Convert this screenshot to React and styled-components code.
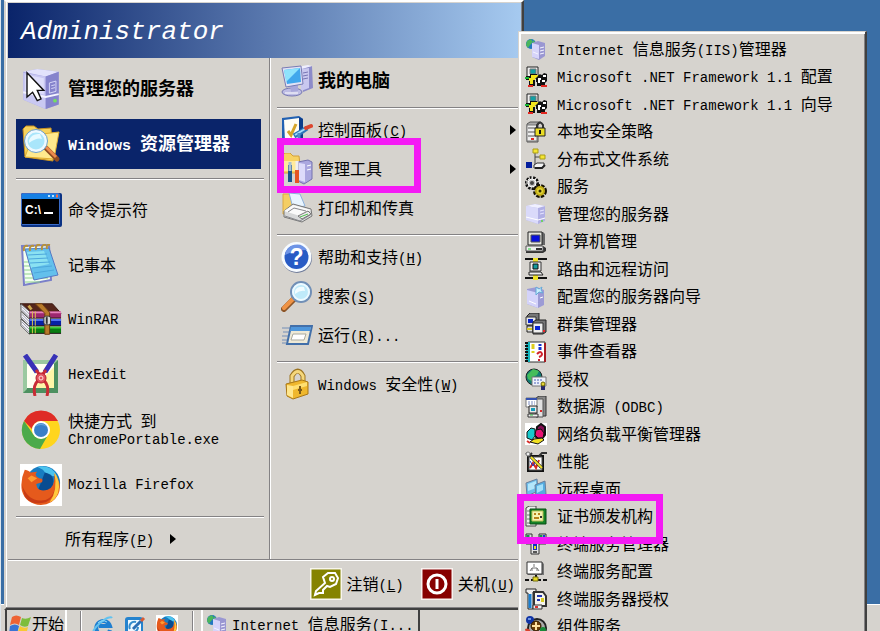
import styled, { createGlobalStyle, css } from "styled-components";

const GlobalStyle = createGlobalStyle`
  * {
    box-sizing: border-box;
  }

  body {
    margin: 0;
    background: #3a6ea5;
    color: #000;
    font-family: "Liberation Mono", "Noto Sans CJK SC", monospace;
    font-size: 16px;
    line-height: 18px;
  }

  button {
    margin: 0;
    border: none;
    background: none;
    color: inherit;
    font: inherit;
    text-align: left;
    cursor: default;
  }

  ul {
    margin: 0;
    padding: 0;
    list-style: none;
  }
`;

const face = "#d6d3ce";

const Desktop = styled.main`
  position: relative;
  display: flex;
  flex-direction: column;
  height: 100vh;
  overflow: hidden;
  border-left: 1px solid #dde5ec;
`;

const Wallpaper = styled.div`
  flex: 1;
  background: #3a6ea5;
`;

const Svg = styled.svg`
  display: block;
  flex: none;
  width: ${(props) => props.$size}px;
  height: ${(props) => props.$size}px;
`;

const Latin = styled.span`
  font-size: ${(props) => (props.$bold ? 15 : 14)}px;
`;

const Cjk = styled.span`
  font-family: "Noto Sans CJK SC", sans-serif;
  font-size: ${(props) => (props.$bold ? 18 : 16)}px;
`;

const Words = styled.span`
  white-space: ${(props) => (props.$lines ? "pre-line" : "pre")};
  font-weight: ${(props) => (props.$bold ? 700 : 400)};
  ${(props) => props.$lines && "line-height: 17px;"}
`;

/* start menu */

const StartMenu = styled.nav`
  position: absolute;
  top: 0;
  left: 3px;
  z-index: 2;
  width: 520px;
  max-width: 100%;
  padding: 1px 1px 1px 2px;
  background: ${face};
  border: 2px solid;
  border-color: #fff #404040 #404040 ${face};
  box-shadow: inset -1px -1px #848284, inset 1px 0 #fff;
`;

const Banner = styled.header`
  display: flex;
  align-items: center;
  height: 55px;
  padding: 2px 13px 0;
  background: linear-gradient(90deg, #0a246a, #a6caf0);
`;

const UserName = styled.h1`
  margin: 0;
  color: #fff;
  font-size: 26px;
  font-style: italic;
  font-weight: 400;
  line-height: 30px;
`;

const Columns = styled.div`
  display: grid;
  grid-template-columns: 262px 1fr;
  height: 502px;
  border-bottom: 1px solid #848284;
`;

const Pinned = styled.div`
  padding: 6px 5px 0 8px;
  border-right: 1px solid #848284;
`;

const Places = styled.div`
  padding: 4px 0 0 6px;
  border-left: 1px solid #fff;
`;

const Stack = styled.ul`
  display: grid;
  gap: ${(props) => props.$gap}px;
`;

const Item = styled.li`
  position: relative;
`;

const Divider = styled.hr`
  height: 2px;
  margin: ${(props) => props.$margin};
  border: solid;
  border-width: 1px 0;
  border-color: #848284 transparent #fff;
`;

const PinnedButton = styled.button`
  display: flex;
  align-items: center;
  gap: 6px;
  width: 245px;
  height: 50px;
  padding: 0 4px;
  ${(props) =>
    props.$active &&
    css`
      background: #0a246a;
      color: #fff;
    `}
`;

const AllPrograms = styled.button`
  display: flex;
  align-items: center;
  gap: 16px;
  height: 38px;
  padding: 0 0 0 49px;
`;

const PlaceButton = styled.button`
  display: flex;
  align-items: center;
  gap: 5px;
  width: 100%;
  height: 38px;
  padding: 0 0 0 4px;
`;

const Arrow = styled.span`
  width: 0;
  height: 0;
  margin-left: ${(props) => (props.$end ? "auto" : "0")};
  margin-right: ${(props) => (props.$end ? "5px" : "0")};
  border: solid transparent;
  border-width: 5px 0 5px 6px;
  border-left-color: #000;
`;

const Footer = styled.footer`
  display: flex;
  align-items: center;
  justify-content: flex-end;
  gap: 17px;
  height: 47px;
  padding-right: 6px;
  border-top: 1px solid #fff;
`;

const FooterButton = styled.button`
  display: flex;
  align-items: center;
  gap: 5px;
  padding: 0;
`;

/* admin tools */

const Submenu = styled.ul`
  position: absolute;
  top: 31px;
  left: 517px;
  z-index: 3;
  width: max-content;
  background: ${face};
  border: 1px solid ${face};
  border-right: 2px solid #404040;
  box-shadow: inset 1px 1px #fff, inset 2px 2px #fff, inset -1px 0 #848284;
  && {
    padding: 3px 2px 2px;
  }
`;

const ToolItem = styled.li`
  position: relative;
  height: 28px;

  &:nth-child(even) {
    height: 27px;
  }
`;

const ToolButton = styled.button`
  display: flex;
  align-items: center;
  gap: 10px;
  width: 100%;
  height: 100%;
  padding: 0 30px 0 4px;
`;

const Marker = styled.span`
  position: absolute;
  z-index: 4;
  top: ${(props) => props.$top}px;
  left: ${(props) => props.$left}px;
  width: ${(props) => props.$width}px;
  height: ${(props) => props.$height}px;
  border: 7px solid #f41af4;
  pointer-events: none;
`;

/* taskbar */

const Taskbar = styled.footer`
  display: flex;
  align-items: flex-start;
  height: 27px;
  padding: 4px 0 0 4px;
  background: ${face};
  box-shadow: inset 0 1px #fff;
`;

const StartButton = styled.button`
  display: flex;
  align-items: center;
  gap: 1px;
  height: 31px;
  width: 62px;
  padding: 2px 2px 0;
  border: 2px solid;
  border-color: #404040 #fff #fff #404040;
  white-space: nowrap;
`;

const Grip = styled.span`
  width: 2px;
  height: 30px;
  margin: 3px ${(props) => props.$after}px 0 ${(props) => props.$before}px;
  background: #848284;
  border-right: 1px solid #fff;
`;

const QuickLaunch = styled.div`
  display: flex;
  gap: 10px;
  padding-top: 7px;
`;

const QuickButton = styled.button`
  padding: 0;
`;

const TaskButton = styled.button`
  display: flex;
  align-items: center;
  gap: 4px;
  width: 219px;
  height: 31px;
  padding: 2px 3px 0;
  border: 2px solid;
  border-color: #fff #404040 #404040 #fff;
`;

/* large drawings */

const ServerShape = () => (
  <>
    <path d="M3 4 18 1 41 4 41 39 27 44 3 34Z" fill="#aaa8e2" />
    <path d="M3 4 18 1 41 4 27 9Z" fill="#e2e2fb" />
    <path d="M3 5 27 9V44L3 34Z" fill="#c9c8f2" />
    <path d="M27 9 41 4V39L27 44Z" fill="#8583cc" />
    <path d="M5 7 25 11V28L5 24Z" fill="#dedefa" />
    <path d="M3 26 27 31 41 28" fill="none" stroke="#f4f4ff" strokeWidth="2" />
    <path d="M31 16 38 14V25L31 27ZM33 19 37 18M33 22 37 21" fill="none" stroke="#dcdcfa" />
    <circle cx="37" cy="35" r="2" fill="#73e05f" />
  </>
);

const ServerCursor = () => (
  <Svg $size={42} viewBox="2 0 40 45">
    <ServerShape />
    <path d="M7 5V31L13 26 18 35 22 33 18 24H25Z" fill="#fff" stroke="#111" strokeWidth="1.5" />
  </Svg>
);

const ExplorerIcon = () => (
  <Svg $size={42} viewBox="0 0 42 42">
    <path d="M3 6 6 3H14L18 6 31 5 33 38 5 34Z" fill="#f7d35d" stroke="#c89120" />
    <path d="M5 34 13 12 39 9 34 36Z" fill="#ffe98d" stroke="#e0ae32" />
    <path d="M26 25 37 36" stroke="#8d4b21" strokeWidth="5" strokeLinecap="round" />
    <path d="M26 24 36 34" stroke="#ed8a4b" strokeWidth="3" />
    <circle cx="16" cy="18" r="10" fill="#a9e6fb" stroke="#eef9ff" strokeWidth="3" />
    <circle cx="16" cy="18" r="11.5" fill="none" stroke="#6e9fc4" />
    <path d="M9 17Q12 10 20 11L22 16Q17 14 9 20Z" fill="#e7faff" />
  </Svg>
);

const PromptIcon = () => (
  <Svg $size={42} viewBox="0 0 42 42">
    <rect x="1" y="4" width="41" height="34" rx="2" fill="#0b3284" />
    <rect x="1" y="4" width="39" height="32" rx="2" fill="#3a6cc8" />
    <rect x="2" y="5" width="37" height="5" fill="#1680e4" />
    <path d="M28 7H30M32 7H34" stroke="#bce2ff" strokeWidth="2" />
    <path d="M36 7H38" stroke="#ff6b3d" strokeWidth="3" />
    <rect x="2" y="10" width="37" height="25" fill="#000" />
    <text x="5" y="25" fill="#fff" fontFamily="Liberation Sans" fontWeight="700" fontSize="12">
      C:\
    </text>
    <path d="M24 24H33" stroke="#fff" strokeWidth="2" />
  </Svg>
);

const NotepadIcon = () => (
  <Svg $size={42} viewBox="0 0 42 42">
    <path d="M2 2 29 1 31 36 4 41Z" fill="#f3fff0" stroke="#7a7fc9" strokeWidth="2" />
    <path d="M4 18H26M4 22H26M4 26H26M4 30H27M5 34H28M5 38H20" stroke="#8fd08c" />
    <path d="M5 5 29 4 38 31 14 36Z" fill="#63c0ec" stroke="#5578c4" />
    <path d="M7 8 24 7 29 20 11 24Z" fill="#8ae1f2" />
    <path d="M8 11 27 10M9 15 28 14M10 19 30 18M12 24 32 22M14 29 34 26" stroke="#4ca8dc" />
    <path d="M4 7Q3 1 8 2M10 7Q9 1 14 2M16 6Q15 0 20 1M22 6Q21 0 26 1M27 5Q26 0 30 1" fill="none" stroke="#b8923a" strokeWidth="2" />
  </Svg>
);

const Book = ({ y, top, side }) => (
  <g transform={`translate(0 ${y})`}>
    <path d="M1 0 10 8V16L1 7Z" fill="#f3f3f7" stroke="#555" />
    <path d="M2 3 10 11M2 6 10 14" stroke="#99a" />
    <path d="M10 8H43V15H10Z" fill={side} />
    <path d="M10 9H43" stroke={top} strokeWidth="2" />
    <path d="M10 15H43" stroke="#1d1014" />
    <path d="M13 8V15M16 8V15" stroke="#e0ca4e" />
  </g>
);

const WinRarIcon = () => (
  <Svg $size={42} viewBox="0 0 44 42">
    <path d="M0 4 34 4 43 14H10Z" fill="#55261b" stroke="#39160f" />
    <Book y={20} top="#41d038" side="#087c12" />
    <Book y={12} top="#4f72f4" side="#0721a5" />
    <Book y={4} top="#e781bd" side="#9d286e" />
    <path d="M16 4H23L31 13V36H26V14Z" fill="#b87a2a" stroke="#6c3d12" />
    <rect x="25" y="17" width="7" height="9" rx="2" fill="#d7d9da" stroke="#333" />
    <path d="M28 18V25" stroke="#333" strokeWidth="2" />
    <path d="M9 6 12 10" stroke="#cda74b" strokeWidth="3" />
  </Svg>
);

const HexEditIcon = () => (
  <Svg $size={42} viewBox="0 0 42 42">
    <rect x="3" y="6" width="35" height="33" fill="#4d9060" />
    <path d="M3 6H38L34 10H7V35L3 39Z" fill="#9bc9a0" />
    <rect x="7" y="10" width="27" height="24" fill="#fffff0" />
    <path d="M13 34 34 13V34Z" fill="#fff6a8" />
    <path d="M5 1 17 18M36 1 25 18" stroke="#3832b7" strokeWidth="5" />
    <path d="M16 16 26 29Q29 34 27 42M26 16 16 29Q13 34 15 42" fill="none" stroke="#c92c35" strokeWidth="3" />
    <circle cx="21" cy="24" r="5" fill="#e1535c" stroke="#b41d2b" />
    <circle cx="21" cy="24" r="2" fill="none" stroke="#ffe0df" />
  </Svg>
);

const ChromeIcon = () => (
  <Svg $size={42} viewBox="0 0 42 42">
    <circle cx="21" cy="21" r="19" fill="#ffd51d" />
    <path d="M4 12A19 19 0 0 1 38 12H21A9 9 0 0 0 12 20Z" fill="#df2c27" />
    <path d="M4 12A19 19 0 0 0 20 40L28 26A9 9 0 0 1 13 25Z" fill="#4baa4b" />
    <circle cx="21" cy="21" r="9" fill="#fff" />
    <circle cx="21" cy="21" r="7" fill="#397fc7" />
    <path d="M15 18A7 7 0 0 1 27 18Q21 14 15 18Z" fill="#67a4dc" />
  </Svg>
);

const FirefoxIcon = ({ size }) => (
  <Svg $size={size} viewBox="0 0 44 44">
    <rect width="44" height="44" fill="#fff" />
    <circle cx="24" cy="20" r="18" fill="#187cc1" />
    <path d="M18 3Q33 0 39 13 28 13 24 6Z" fill="#4cc3ee" />
    <path d="M26 9Q38 11 34 25 29 32 19 27Z" fill="#084c91" />
    <path d="M5 6Q10 7 11 9L18 8Q14 12 20 15 25 15 23 19L17 21Q18 30 29 27 37 24 36 10 45 21 40 32 34 43 22 43 6 42 2 28 0 17 5 6Z" fill="#e55a1c" />
    <path d="M2 22Q9 40 24 38 35 37 37 23 36 36 27 40 12 44 5 34Z" fill="#c83b15" />
    <path d="M36 9Q43 18 40 30 37 38 31 40 40 28 36 9Z" fill="#ffc83d" />
    <path d="M8 15 12 12 18 15 12 19Z" fill="#ff9b31" />
  </Svg>
);

const ComputerIcon = () => (
  <Svg $size={32} viewBox="0 0 32 32">
    <path d="M20 3 31 1 32 23 22 27Z" fill="#8c8bc9" />
    <path d="M16 2 27 0 31 1 21 4Z" fill="#eeeefe" />
    <path d="M20 4 28 3V23L20 26Z" fill="#c9c8ef" />
    <path d="M22 8 27 7M22 11 27 10M22 14 27 13" stroke="#7776b5" />
    <ellipse cx="11" cy="27" rx="10" ry="4" fill="#bdbce4" stroke="#7778b3" />
    <path d="M9 20 17 20 17 26 10 27Z" fill="#a8a7da" />
    <path d="M1 3 20 1 22 19 5 22Z" fill="#e1e2f5" stroke="#797bb4" />
    <path d="M3 5 19 3 20 17 6 19Z" fill="#41a7ec" />
    <path d="M3 5 19 3 5 17Z" fill="#8fe3fc" />
    <path d="M4 28H17" stroke="#fff" />
  </Svg>
);

const ControlIcon = () => (
  <Svg $size={32} viewBox="0 0 32 32">
    <path d="M1 4 18 2 22 5V27L5 30 1 27Z" fill="#2261b2" />
    <path d="M3 6 18 4V24L4 27Z" fill="#fffdf5" />
    <path d="M18 3 22 5V27L18 24Z" fill="#0c3d8b" />
    <path d="M7 17 10 21 15 10" fill="none" stroke="#d6a529" strokeWidth="3" />
    <path d="M13 22 20 18 26 14" stroke="#2b75b7" strokeWidth="5" />
    <path d="M14 21 24 15" stroke="#a4dcfa" strokeWidth="2" />
    <path d="M25 14 30 12" stroke="#dd462f" strokeWidth="4" strokeLinecap="round" />
    <path d="M18 19V29" stroke="#4e8dca" strokeWidth="3" />
  </Svg>
);

const AdminIcon = () => (
  <Svg $size={32} viewBox="0 0 32 32">
    <path d="M1 2 4 0H9L12 3H18L20 20H2Z" fill="#f7d262" stroke="#d3a038" />
    <path d="M2 8H18V18H3Z" fill="#ffeb9c" />
    <path d="M17 9 27 7 31 9V26L23 31 17 28Z" fill="#aaa7df" stroke="#7472ae" />
    <path d="M18 10 24 11V29L18 27Z" fill="#dddbfa" />
    <path d="M26 13 30 12M26 17 30 16" stroke="#fff" />
    <path d="M9 12V29" stroke="#18548c" strokeWidth="4" />
    <path d="M9 9V18" stroke="#a9bed0" strokeWidth="3" />
    <path d="M16 8V20" stroke="#eee" strokeWidth="3" />
    <path d="M16 17V30" stroke="#e55523" strokeWidth="4" />
  </Svg>
);

const PrinterIcon = () => (
  <Svg $size={32} viewBox="0 0 32 32">
    <path d="M2 2H11L15 8V22H2Z" fill="#f4ce64" stroke="#dba840" />
    <path d="M8 1 19 2 24 14 12 16Z" fill="#e9f5ff" stroke="#8cb2dc" />
    <path d="M3 19 12 12 30 17 31 24 21 30 3 25Z" fill="#d7d8d9" stroke="#777" />
    <path d="M3 19 12 13 30 18 19 24Z" fill="#fafafa" />
    <path d="M4 24 19 29 29 23M7 20 13 16 25 19" fill="none" stroke="#88898d" />
    <path d="M17 24 27 19 30 22 21 27Z" fill="#ececec" stroke="#777" />
    <path d="M19 25 27 22" stroke="#4dbd4c" />
  </Svg>
);

const HelpIcon = () => (
  <Svg $size={32} viewBox="0 0 32 32">
    <circle cx="16" cy="17" r="15" fill="#707c9a" />
    <circle cx="15.5" cy="16" r="15" fill="#f7fbff" />
    <circle cx="15.5" cy="16" r="12" fill="#285bc5" />
    <path d="M4 14A12 12 0 0 1 26 9Q14 9 4 14Z" fill="#6e94e6" />
    <text x="15.5" y="24" textAnchor="middle" fill="#fff" fontFamily="Liberation Sans" fontSize="23" fontWeight="700">
      ?
    </text>
  </Svg>
);

const SearchIcon = () => (
  <Svg $size={32} viewBox="0 0 32 32">
    <path d="M3 29 14 18" stroke="#8e5628" strokeWidth="6" strokeLinecap="round" />
    <path d="M3 28 13 18" stroke="#ef9345" strokeWidth="4" strokeLinecap="round" />
    <circle cx="20" cy="12" r="10" fill="#a9ddf5" stroke="#718fb6" strokeWidth="2" />
    <circle cx="20" cy="12" r="8" fill="#bfeafa" stroke="#edf9ff" strokeWidth="2" />
    <path d="M14 11Q16 6 23 7L24 11Q19 10 14 14Z" fill="#f2fcff" />
  </Svg>
);

const RunIcon = () => (
  <Svg $size={32} viewBox="0 0 32 32">
    <path d="M1 9H9M2 13H8M1 17H8M1 21H6M1 24H5" stroke="#738eb7" />
    <path d="M10 7H31L27 25H6Z" fill="#eee9d6" stroke="#426fa9" strokeWidth="2" />
    <path d="M10 8H30L29 12H9Z" fill="#4e96dc" />
    <path d="M12 15H25L23 21H10Z" fill="#fff" stroke="#a9a99f" />
  </Svg>
);

const LockIcon = () => (
  <Svg $size={32} viewBox="0 0 32 32">
    <path d="M11 15V8Q17-2 22 8V15" fill="none" stroke="#9c7421" strokeWidth="5" />
    <path d="M11 15V8Q17-1 22 8V15" fill="none" stroke="#f5d77b" strokeWidth="3" />
    <path d="M5 16 21 12 27 14V26L12 31 6 28Z" fill="#efb72d" stroke="#a97716" />
    <path d="M6 17 12 18V30L6 27Z" fill="#ffe68d" />
    <path d="M12 18 26 14V18L12 22Z" fill="#ffdf71" />
    <path d="M19 18V26M17 22H21" stroke="#7b5a19" strokeWidth="2" />
  </Svg>
);

const KeyIcon = () => (
  <Svg $size={32} viewBox="0 0 32 32">
    <rect width="32" height="32" fill="#f7f5ed" />
    <rect x="1.5" y="1.5" width="29" height="29" fill="#858300" />
    <path d="M15 15 13 9 18 5 25 5 28 10 26 16 20 19 17 18 13 22 13 25 9 25 5 27 6 23Z" fill="none" stroke="#fff" strokeWidth="2" />
    <circle cx="22" cy="11" r="2" fill="none" stroke="#fff" strokeWidth="2" />
  </Svg>
);

const PowerIcon = () => (
  <Svg $size={32} viewBox="0 0 32 32">
    <rect width="32" height="32" fill="#f7f1ee" />
    <rect x="1.5" y="1.5" width="29" height="29" fill="#870000" />
    <circle cx="16" cy="16" r="9" fill="none" stroke="#fff" strokeWidth="3" />
    <path d="M16 11V21" stroke="#fff" strokeWidth="3" />
  </Svg>
);

/* small drawings, 22 units square */

const Small = ({ children }) => (
  <Svg $size={22} viewBox="0 0 22 22">
    {children}
  </Svg>
);

const MiniServer = () => (
  <>
    <path d="M1 3 10 1 20 3V18L13 21 1 17Z" fill="#b1b0e5" />
    <path d="M1 3 13 5V21L1 17Z" fill="#dadafa" />
    <path d="M1 3 10 1 20 3 13 5Z" fill="#f0f0ff" />
    <path d="M1 14 13 17 20 15" fill="none" stroke="#fff" />
    <path d="M15 8 19 7M15 11 19 10" stroke="#e6e5ff" />
    <path d="M16 18H18" stroke="#70d064" strokeWidth="2" />
  </>
);

const IisIcon = () => (
  <Small>
    <circle cx="6" cy="6" r="5" fill="#2478bf" />
    <path d="M2 3 6 1 8 4 5 7 3 10 1 7ZM8 2 11 5 8 7Z" fill="#4bb65c" />
    <path d="M7 5 13 3 20 5V18L14 22 7 19Z" fill="#9a97d2" />
    <path d="M7 5 14 7V21L7 19Z" fill="#d6d4fa" />
    <path d="M15 10 19 9M15 13 19 12M15 16 19 15M8 14 13 16" stroke="#f5f4ff" />
  </Small>
);

const NetIcon = () => (
  <Small>
    <path d="M2 1H13V12H2Z" fill="#eee" stroke="#222" />
    <path d="M5 3H11V8H5Z" fill="#139fa4" stroke="#777" />
    <path d="M1 10H5V8H12V12H10V20H4V14H1Z" fill="#111" />
    <path d="M4 12H6V9H13V12H10V14H8V18H5V15H4Z" fill="#f3e51c" />
    <path d="M0 12H4" stroke="#19b437" strokeWidth="2" />
    <path d="M13 10Q14 7 17 9L19 7 22 8V15L20 17V20H12V16H11V12Z" fill="#111" />
    <path d="M13 12H16V14H15V17H13ZM18 9H21V11H18ZM17 14H20V16H17Z" fill="#fff" />
    <path d="M3 20H8M16 20H22" stroke="#e22720" strokeWidth="2" />
  </Small>
);

const PolicyIcon = () => (
  <Small>
    <path d="M2 3 5 1H16L13 4V21H2Z" fill="#aaa" stroke="#555" />
    <path d="M2 4H12V20H2Z" fill="#eee" stroke="#777" />
    <path d="M3 7H11M3 11H11M3 15H11" stroke="#555" />
    <path d="M6 18H9" stroke="#e02a22" strokeWidth="2" />
    <path d="M12 8V4Q15-1 18 4V8" fill="none" stroke="#333" strokeWidth="2" />
    <path d="M10 7H20V15H10Z" fill="#e9dc24" stroke="#222" />
    <path d="M15 9V13" stroke="#111" strokeWidth="2" />
  </Small>
);

const DfsIcon = () => (
  <Small>
    <path d="M10 4V17M10 9H15M10 17H15" fill="none" stroke="#444" />
    <path d="M8 1H13V5H8ZM15 7H20V11H15Z" fill="#f4e532" stroke="#a99c18" />
    <rect x="1" y="14" width="6" height="6" fill="#051f9d" />
    <path d="M9 17 12 15H19V18L17 20H9Z" fill="#f4f4f4" stroke="#333" />
    <path d="M10 20H17L20 17" fill="none" stroke="#222" strokeWidth="2" />
  </Small>
);

const GearIcon = () => (
  <Small>
    <circle cx="7" cy="7" r="5" fill="none" stroke="#111" strokeWidth="4" strokeDasharray="2 1" />
    <circle cx="7" cy="7" r="4" fill="#c5c5c5" stroke="#fff" />
    <circle cx="7" cy="7" r="2" fill="#444" />
    <circle cx="15" cy="15" r="5" fill="none" stroke="#151000" strokeWidth="4" strokeDasharray="3 1" />
    <circle cx="15" cy="15" r="4" fill="#e4d737" stroke="#c2ad17" strokeWidth="2" />
    <circle cx="15" cy="15" r="1.5" fill="#332c00" />
    <path d="M1 6H3M3 3 5 5M7 0V3M11 3 9 5" stroke="#eee" />
  </Small>
);

const ServerIcon = () => (
  <Small>
    <MiniServer />
  </Small>
);

const ManageIcon = () => (
  <Small>
    <path d="M4 1H18L20 3V14H4Z" fill="#666" />
    <path d="M3 1H17V14H3Z" fill="#e5e5df" stroke="#222" />
    <path d="M6 4H15V11H6Z" fill="#0910db" stroke="#555" />
    <path d="M1 15H18L21 17V20L18 22H1Z" fill="#333" />
    <path d="M1 15H18V20H1Z" fill="#eee" stroke="#555" />
    <path d="M3 18H6" stroke="#21cf32" />
    <path d="M11 18H17" stroke="#333" strokeWidth="2" />
  </Small>
);

const RoutingIcon = () => (
  <Small>
    <path d="M0 1H22M0 20H22" stroke="#111" strokeWidth="2" />
    <path d="M8 0H13V4H8ZM8 17H13V22H8Z" fill="#eee229" />
    <path d="M5 4H16V13H5Z" fill="#eee" stroke="#333" />
    <path d="M8 6H13V11H8Z" fill="#139a9b" stroke="#111" />
    <path d="M4 14H16L18 17H4Z" fill="#eee" stroke="#222" />
  </Small>
);

const WizardIcon = () => (
  <Small>
    <path d="M2 3 12 1 19 4V19L13 22 2 18Z" fill="#9c9bd5" />
    <path d="M2 4 13 7V22L2 18Z" fill="#d4d3fa" />
    <path d="M11 1 14 3 17 1 16 4 18 7 14 6 11 9 11 5Z" fill="#c7effc" stroke="#66a9d8" />
    <path d="M4 15 11 18M15 12 18 11" stroke="#fff" />
  </Small>
);

const ClusterIcon = () => (
  <Small>
    <path d="M2 3 5 0H14V12H2Z" fill="#777" stroke="#222" />
    <path d="M1 4H11V12H1Z" fill="#e5e5e5" stroke="#333" />
    <path d="M3 6H8V10H3Z" fill="#0822ca" />
    <path d="M2 13H8V19H2Z" fill="#ddd" stroke="#222" />
    <path d="M2 16H7" stroke="#dac928" strokeWidth="2" />
    <path d="M8 9 11 7H21V19L18 21H8Z" fill="#777" stroke="#222" />
    <path d="M8 10H18V20H8Z" fill="#eee" stroke="#333" />
    <path d="M10 13H15V17H10Z" fill="#0824d9" />
    <path d="M18 18H20" stroke="#e9232a" strokeWidth="2" />
  </Small>
);

const EventIcon = () => (
  <Small>
    <path d="M3 1H20V21H3Z" fill="#fff" stroke="#333" />
    <path d="M3 1V21" stroke="#12b5bd" strokeWidth="4" />
    <path d="M0 2H3M0 5H3M0 8H3M0 11H3M0 14H3M0 17H3M0 20H3" stroke="#111" strokeWidth="2" />
    <path d="M8 3V8M8 10V12" stroke="#dfcd1c" strokeWidth="3" />
    <path d="M15 3V5M15 6V9" stroke="#1232cf" strokeWidth="3" />
    <path d="M12 13Q16 9 17 13Q17 15 14 16M14 18V20" fill="none" stroke="#d0222c" strokeWidth="2" />
    <path d="M20 2V21" stroke="#a51b21" strokeWidth="2" />
  </Small>
);

const LicenseIcon = () => (
  <Small>
    <circle cx="9" cy="9" r="8" fill="#127c75" stroke="#222" />
    <path d="M2 7 8 1 14 3 12 7 8 9 8 14 3 11Z" fill="#45bd5b" />
    <path d="M7 9H21V18H7Z" fill="#eef1fb" stroke="#777" />
    <path d="M9 12H18M9 15H15" stroke="#4b62b4" strokeDasharray="2 1" />
    <path d="M16 16H20V22H16Z" fill="#26276d" />
    <circle cx="18" cy="16" r="2" fill="#e5d438" stroke="#716900" />
  </Small>
);

const OdbcIcon = () => (
  <Small>
    <path d="M11 2 14 0H21V20H11Z" fill="#888" stroke="#333" />
    <path d="M11 3H18V21H11Z" fill="#e1e1e1" stroke="#555" />
    <path d="M1 2H12V11H1Z" fill="#fff" stroke="#777" />
    <path d="M1 3H12" stroke="#3552b0" strokeWidth="2" />
    <path d="M3 6H10M3 8H10" stroke="#7a8bc0" strokeDasharray="2 1" />
    <path d="M4 10H12V17H4Z" fill="#e9e9e9" stroke="#222" />
    <path d="M6 12H10V15H6Z" fill="#169cba" />
    <path d="M3 18H13V21H3Z" fill="#eee" stroke="#333" />
    <path d="M5 19H8" stroke="#30ba40" />
    <path d="M15 15H17" stroke="#dc292a" strokeWidth="2" />
  </Small>
);

const BalanceIcon = () => (
  <Small>
    <rect width="22" height="22" fill="#fff" />
    <path d="M12 4 16 1 20 4V12L16 17 11 14Z" fill="#850d52" stroke="#111" strokeWidth="2" />
    <path d="M2 9 6 5 10 6V13L7 17 2 15Z" fill="#18c9cc" stroke="#111" />
    <path d="M11 7 16 6 19 10 18 15 13 15 10 12Z" fill="#e61272" stroke="#111" />
    <path d="M9 16 17 15 19 17 13 21 5 19Z" fill="#f1e122" stroke="#111" />
    <path d="M2 18 5 20" stroke="#d72c27" strokeWidth="2" />
  </Small>
);

const PerfIcon = () => (
  <Small>
    <path d="M3 5H18V20H3Z" fill="#ccc" stroke="#111" strokeWidth="2" />
    <path d="M4 6H17V19H4Z" fill="#fff" stroke="#555" />
    <path d="M5 17 8 12 11 17 14 9" fill="none" stroke="#d62820" strokeWidth="2" />
    <path d="M5 10 8 15 11 9 15 17" fill="none" stroke="#2234c1" />
    <path d="M6 6 17 17" stroke="#111" strokeWidth="3" />
    <path d="M6 6 17 17" stroke="#efe12b" strokeWidth="2" />
    <path d="M1 2 4 5 7 2M14 5 17 2H22" fill="none" stroke="#333" strokeWidth="2" />
    <circle cx="3" cy="3" r="2" fill="#eee" stroke="#777" />
  </Small>
);

const RemoteIcon = () => (
  <Small>
    <path d="M1 5 12 1 13 13 2 18Z" fill="#6fbde9" stroke="#6b7f9c" />
    <path d="M3 6 11 3V10L3 13Z" fill="#b3e6fb" />
    <path d="M10 7 20 3 21 16 11 20Z" fill="#55ace0" stroke="#6b7f9c" />
    <path d="M12 8 18 6V12L12 15Z" fill="#a3e0fa" />
    <path d="M1 19 8 17 12 20 5 22Z" fill="#dfe2f3" stroke="#777" />
  </Small>
);

const CertIcon = () => (
  <Small>
    <path d="M1 2 4 0H11V20H1Z" fill="#eee" stroke="#444" />
    <path d="M2 5H8M2 9H8M2 13H8M2 17H8" stroke="#777" />
    <path d="M5 3H21V18H5Z" fill="#168427" stroke="#084d14" />
    <path d="M7 5H18V15H7Z" fill="#f5f3b2" stroke="#b8bf55" />
    <path d="M9 8H11M13 8H15M9 12H14" stroke="#b9811a" strokeWidth="2" />
    <path d="M15 11H17" stroke="#333" strokeWidth="2" />
  </Small>
);

const TermManagerIcon = () => (
  <Small>
    <path d="M1 1H7V11H1ZM14 1H21V11H14Z" fill="#ddd" stroke="#333" />
    <path d="M3 2V6M16 2V6" stroke="#149548" strokeWidth="3" />
    <path d="M19 2V6" stroke="#1741d5" strokeWidth="2" />
    <path d="M6 8H14V21H6Z" fill="#e2e2e2" stroke="#333" />
    <path d="M8 11H12V17H8Z" fill="#152fc4" />
    <path d="M10 13V16" stroke="#e6dc25" strokeWidth="2" />
    <path d="M8 19H12" stroke="#555" strokeWidth="2" />
  </Small>
);

const TermConfigIcon = () => (
  <Small>
    <path d="M3 1H17L19 3V14H3Z" fill="#777" />
    <path d="M2 1H17V13H2Z" fill="#fff" stroke="#333" />
    <path d="M9 3V6M5 10 7 7H12L14 10M7 7V10M12 7V10" fill="none" stroke="#777" />
    <path d="M11 14V18M0 19H4M6 19H16M18 19H22" stroke="#111" strokeWidth="2" />
    <path d="M8 16H13V20H8Z" fill="#e6d924" stroke="#777010" />
  </Small>
);

const TermLicenseIcon = () => (
  <Small>
    <path d="M1 1H11V4H8V21H3V5H1Z" fill="#eee" stroke="#222" />
    <path d="M5 6V20" stroke="#197ed1" strokeWidth="3" />
    <path d="M9 4H18L21 8V18H9Z" fill="#f5f5ef" stroke="#333" strokeWidth="2" />
    <path d="M12 8H17M12 12H15" stroke="#2337b0" strokeWidth="2" />
    <path d="M16 10H19V14H16Z" fill="#d9cd25" />
    <path d="M8 17H17V21H8Z" fill="#eee" stroke="#333" />
    <path d="M10 19H13" stroke="#d83231" strokeWidth="2" />
  </Small>
);

const ComponentIcon = () => (
  <Small>
    <circle cx="12" cy="12" r="9" fill="#aaa" stroke="#222" strokeWidth="2" />
    <circle cx="5" cy="4" r="4" fill="#1235a4" />
    <path d="M3 3H6" stroke="#6d94e3" strokeWidth="2" />
    <circle cx="11" cy="10" r="5" fill="#6e3f09" stroke="#2e1a00" />
    <path d="M11 6V14M7 10H15" stroke="#ffe1a2" strokeWidth="2" />
    <path d="M0 13Q5 11 7 19L2 22Z" fill="#d8422c" />
    <circle cx="18" cy="14" r="3" fill="#188a38" />
  </Small>
);

const FlagIcon = () => (
  <Small>
    <path d="M3 3Q7 0 12 3L10 11Q6 8 1 11Z" fill="#ee6334" />
    <path d="M13 4Q17 6 22 3L19 12Q15 14 11 11Z" fill="#7dbd3b" />
    <path d="M1 12Q6 9 10 12L8 20Q4 18 0 20Z" fill="#3974d5" />
    <path d="M11 12Q15 15 19 13L17 21Q12 23 8 20Z" fill="#f8c832" />
  </Small>
);

const IeIcon = () => (
  <Small>
    <path d="M18 15A7 7 0 1 1 18 11H7" fill="none" stroke="#1f7fd0" strokeWidth="4" />
    <path d="M2 19Q-1 16 8 8 18 0 20 3" fill="none" stroke="#62c2ef" strokeWidth="2" />
    <path d="M6 8Q10 4 15 7" fill="none" stroke="#91dcfa" />
  </Small>
);

const ShowDesktopIcon = () => (
  <Small>
    <rect x="1" y="2" width="18" height="19" rx="3" fill="#2583ce" />
    <rect x="4" y="5" width="13" height="14" fill="#eff9ff" />
    <path d="M6 14A5 5 0 0 1 12 7M14 12A5 5 0 0 1 8 17" fill="none" stroke="#368ccc" strokeWidth="2" />
    <path d="M9 14 17 6" stroke="#2b6eb3" strokeWidth="3" />
    <path d="M17 6 20 3" stroke="#d65a35" strokeWidth="3" />
  </Small>
);

const pinned = [
  { text: "管理您的服务器", Icon: ServerCursor, bold: true },
  { text: "Windows 资源管理器", Icon: ExplorerIcon, bold: true, active: true },
];

const recent = [
  { text: "命令提示符", Icon: PromptIcon },
  { text: "记事本", Icon: NotepadIcon },
  { text: "WinRAR", Icon: WinRarIcon },
  { text: "HexEdit", Icon: HexEditIcon },
  { text: "快捷方式 到\nChromePortable.exe", Icon: ChromeIcon, lines: true },
  { text: "Mozilla Firefox", Icon: () => <FirefoxIcon size={42} /> },
];

const places = [
  [{ text: "我的电脑", Icon: ComputerIcon, bold: true }],
  [
    { text: "控制面板", hotkey: "C", Icon: ControlIcon, arrow: true },
    { text: "管理工具", Icon: AdminIcon, arrow: true, marked: true },
    { text: "打印机和传真", Icon: PrinterIcon },
  ],
  [
    { text: "帮助和支持", hotkey: "H", Icon: HelpIcon },
    { text: "搜索", hotkey: "S", Icon: SearchIcon },
    { text: "运行", hotkey: "R", tail: "...", Icon: RunIcon },
  ],
  [{ text: "Windows 安全性", hotkey: "W", Icon: LockIcon }],
];

const tools = [
  { text: "Internet 信息服务(IIS)管理器", Icon: IisIcon },
  { text: "Microsoft .NET Framework 1.1 配置", Icon: NetIcon },
  { text: "Microsoft .NET Framework 1.1 向导", Icon: NetIcon },
  { text: "本地安全策略", Icon: PolicyIcon },
  { text: "分布式文件系统", Icon: DfsIcon },
  { text: "服务", Icon: GearIcon },
  { text: "管理您的服务器", Icon: ServerIcon },
  { text: "计算机管理", Icon: ManageIcon },
  { text: "路由和远程访问", Icon: RoutingIcon },
  { text: "配置您的服务器向导", Icon: WizardIcon },
  { text: "群集管理器", Icon: ClusterIcon },
  { text: "事件查看器", Icon: EventIcon },
  { text: "授权", Icon: LicenseIcon },
  { text: "数据源 (ODBC)", Icon: OdbcIcon },
  { text: "网络负载平衡管理器", Icon: BalanceIcon },
  { text: "性能", Icon: PerfIcon },
  { text: "远程桌面", Icon: RemoteIcon },
  { text: "证书颁发机构", Icon: CertIcon, marked: true },
  { text: "终端服务管理器", Icon: TermManagerIcon },
  { text: "终端服务配置", Icon: TermConfigIcon },
  { text: "终端服务器授权", Icon: TermLicenseIcon },
  { text: "组件服务", Icon: ComponentIcon },
];

// Latin runs are set smaller so that two letters take the width of one Chinese character
const Label = ({ text, hotkey, tail, lines, bold }) => (
  <Words $lines={lines} $bold={bold}>
    {text
      .split(/([\x20-\x7e]+)/)
      .filter(Boolean)
      .map((run, i) =>
        /^[\x20-\x7e]/.test(run) ? (
          <Latin key={i} $bold={bold}>
            {run}
          </Latin>
        ) : (
          <Cjk key={i} $bold={bold}>
            {run}
          </Cjk>
        )
      )}
    {hotkey && (
      <Latin>
        (<u>{hotkey}</u>){tail}
      </Latin>
    )}
  </Words>
);

const PinnedList = ({ items }) => (
  <Stack $gap={5}>
    {items.map(({ Icon, text, bold, active, lines }) => (
      <Item key={text}>
        <PinnedButton $active={active}>
          <Icon />
          <Label text={text} lines={lines} bold={bold} />
        </PinnedButton>
      </Item>
    ))}
  </Stack>
);

const PlaceList = ({ items }) => (
  <Stack $gap={1}>
    {items.map(({ Icon, text, hotkey, tail, bold, arrow, marked }) => (
      <Item key={text}>
        <PlaceButton>
          <Icon />
          <Label text={text} hotkey={hotkey} tail={tail} bold={bold} />
          {arrow && <Arrow $end />}
        </PlaceButton>
        {marked && <Marker $top={-12} $left={0} $width={144} $height={55} />}
      </Item>
    ))}
  </Stack>
);

const App = () => {
  return (
    <Desktop>
      <GlobalStyle />
      <Wallpaper />
      <StartMenu>
        <Banner>
          <UserName>Administrator</UserName>
        </Banner>
        <Columns>
          <Pinned>
            <PinnedList items={pinned} />
            <Divider $margin="9px 0 5px" />
            <PinnedList items={recent} />
            <Divider $margin="6px 0 2px" />
            <AllPrograms>
              <Label text="所有程序" hotkey="P" />
              <Arrow />
            </AllPrograms>
          </Pinned>
          <Places>
            {places.map((items, i) => (
              <div key={i}>
                {i > 0 && <Divider $margin="7px 0 2px" />}
                <PlaceList items={items} />
              </div>
            ))}
          </Places>
        </Columns>
        <Footer>
          <FooterButton>
            <KeyIcon />
            <Label text="注销" hotkey="L" />
          </FooterButton>
          <FooterButton>
            <PowerIcon />
            <Label text="关机" hotkey="U" />
          </FooterButton>
        </Footer>
      </StartMenu>
      <Submenu>
        {tools.map(({ Icon, text, marked }) => (
          <ToolItem key={text}>
            <ToolButton>
              <Icon />
              <Label text={text} />
            </ToolButton>
            {marked && <Marker $top={-9} $left={-4} $width={146} $height={50} />}
          </ToolItem>
        ))}
      </Submenu>
      <Taskbar>
        <StartButton>
          <FlagIcon />
          <Label text="开始" />
        </StartButton>
        <Grip $before={13} $after={10} />
        <QuickLaunch>
          <QuickButton aria-label="Internet Explorer">
            <IeIcon />
          </QuickButton>
          <QuickButton aria-label="显示桌面">
            <ShowDesktopIcon />
          </QuickButton>
          <QuickButton aria-label="Firefox">
            <FirefoxIcon size={22} />
          </QuickButton>
        </QuickLaunch>
        <Grip $before={14} $after={7} />
        <TaskButton>
          <IisIcon />
          <Label text="Internet 信息服务(I..." />
        </TaskButton>
      </Taskbar>
    </Desktop>
  );
};

export default App;
